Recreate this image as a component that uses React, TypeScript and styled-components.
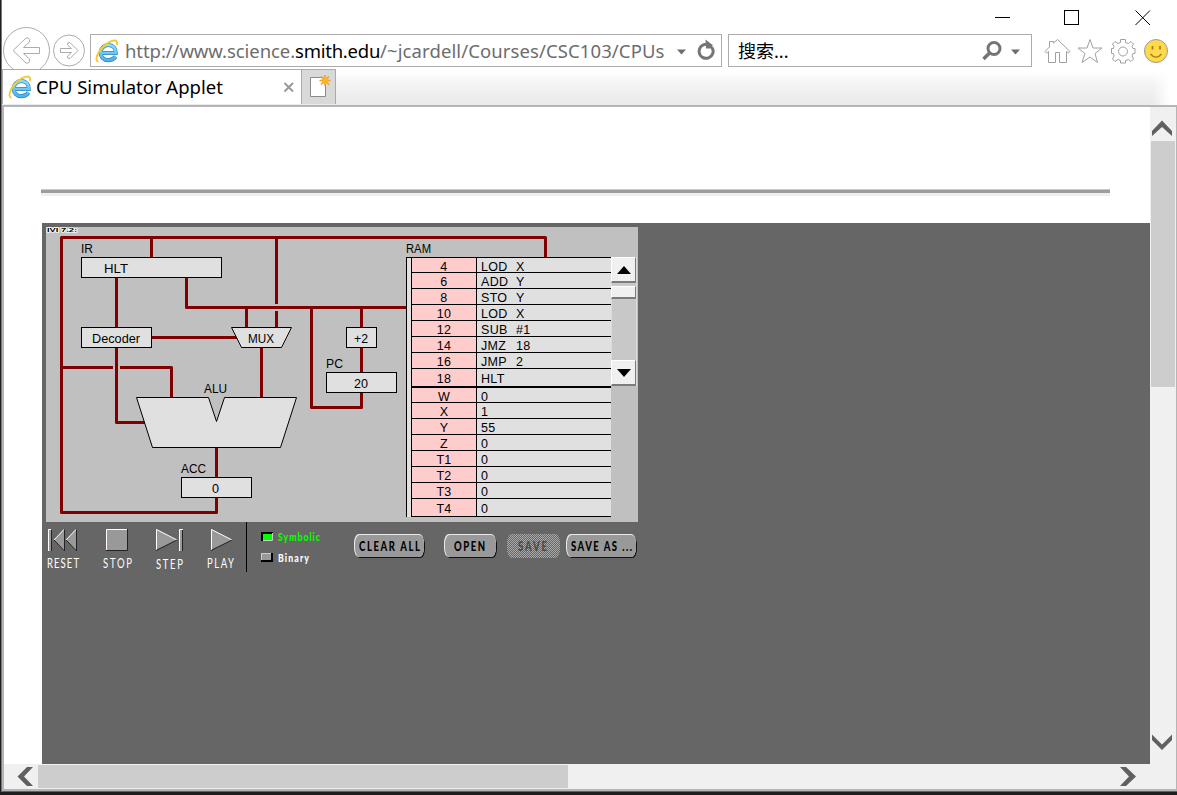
import React from "react";
import styled, { createGlobalStyle } from "styled-components";

const Global = createGlobalStyle`
  * { box-sizing: border-box; }
  body { margin: 0; background: #1c1c1c; overflow: hidden; }
`;

const UI_FONT = `"Noto Sans", "Noto Sans CJK SC", sans-serif`;

const Frame = styled.div`
  width: 1177px;
  height: 795px;
  padding-left: 1px;
  background: #1e1e20;
`;
const Window = styled.div`
  width: 1176px;
  height: 792px;
  border-left: 1px solid #3c87c7;
  border-bottom: 1px solid #1f74bd;
  background: #fff;
  display: flex;
  flex-direction: column;
  font-family: ${UI_FONT};
`;
const TitleBar = styled.div`
  height: 34px;
  flex: none;
  display: flex;
  justify-content: flex-end;
  padding: 10px 26px 0 0;
  gap: 54px;
`;
const NavBar = styled.div`
  height: 35px;
  flex: none;
  display: flex;
`;
const NavButtons = styled.svg`
  width: 88px;
  height: 42px;
  margin-top: -7px;
  flex: none;
`;
const Field = styled.div<{ $w: number }>`
  width: ${(p) => p.$w}px;
  height: 33px;
  border: 1px solid #ababab;
  display: flex;
  align-items: center;
  white-space: nowrap;
  flex: none;
`;
const Url = styled.div`
  width: 546px;
  margin-left: 6px;
  font-size: 18.5px;
  line-height: 30px;
  color: #6d6d6d;
  letter-spacing: -0.07px;
  b { font-weight: 400; color: #000; letter-spacing: -0.25px; }
  span { letter-spacing: 0.1px; }
`;
const Placeholder = styled.div`
  width: 245px;
  padding-left: 9px;
  font-size: 18px;
  line-height: 30px;
  color: #000;
`;
const Tools = styled.div`
  display: flex;
  gap: 6px;
  padding: 4px 0 0 12px;
`;
const TabStrip = styled.div`
  height: 36px;
  flex: none;
  display: flex;
  padding-bottom: 1px;
  background: linear-gradient(90deg, transparent 1150px, #fff 1168px),
    linear-gradient(#fff 2px, #f3f3f3 16px, #ebebeb 34px);
`;
const Tab = styled.div`
  width: 299px;
  height: 35px;
  border-top: 1px solid #ababab;
  border-left: 1px solid #ababab;
  background: #fff;
  display: flex;
  align-items: center;
  padding: 0 0 1px 5px;
  font-size: 18.5px;
  color: #000;
`;
const TabTitle = styled.span`
  width: 251px;
  padding-left: 4px;
  white-space: nowrap;
`;
const NewTab = styled.div`
  width: 35px;
  height: 35px;
  border: 1px solid #ababab;
  border-bottom: 0;
  background: #d9d9d9;
  padding: 5px 0 0 7px;
`;
const Viewport = styled.div`
  flex: 1;
  border: 2px solid #b5b5b5;
  border-right-width: 1px;
  display: grid;
  grid-template-columns: 1146px 26px;
  grid-template-rows: 657px 24px;
  background: #f0f0f0;
`;
const Page = styled.div`
  background: #fff;
  padding-top: 82px;
  overflow: hidden;
`;
const Rule = styled.div`
  width: 1069px;
  height: 7px;
  margin-left: 37px;
  background: linear-gradient(#c9c9c9 1px, #9d9d9d 1px 4px, #efefef 4px);
`;
const Applet = styled.div`
  margin: 27px 0 0 38px;
  height: 541px;
  background: #666;
  padding: 4px;
`;
const Machine = styled.div`
  width: 592px;
  height: 295px;
  background: #c0c0c0;
  display: grid;
  font-family: "Liberation Sans", Arial, sans-serif;
  & > * { grid-area: 1 / 1; }
`;
const Ram = styled.div`
  margin: 30px 0 0 360px;
  display: flex;
  width: 232px;
`;
const Cells = styled.div`
  width: 205px;
  height: 260px;
  border: 1px solid #000;
  border-right: 0;
  border-bottom: 0;
  background: #e0e0e0;
  padding-left: 4px;
`;
const lineHeights: Record<number, number> = { 15: 19, 16: 18, 18: 21, 19: 20 };
const Row = styled.div<{ $h: number; $thick?: boolean }>`
  height: ${(p) => p.$h}px;
  border-left: 1px solid #000;
  border-bottom: ${(p) => (p.$thick ? 2 : 1)}px solid #000;
  display: flex;
  font-size: 12.5px;
  line-height: ${(p) => lineHeights[p.$h]}px;
  letter-spacing: 0.3px;
  white-space: pre;
`;
const Addr = styled.div`
  width: 65px;
  background: #ffcccc;
  border-right: 1px solid #000;
  text-align: center;
`;
const Op = styled.div`
  padding-left: 4px;
  min-width: 39px;
`;
const RamScroll = styled.div`
  width: 26px;
  height: 129px;
  background: #c8c8c8;
  border: 1px solid #dcdcdc;
  border-width: 0 1px;
  display: flex;
  flex-direction: column;
`;
const Raised = styled.div<{ $h: number }>`
  height: ${(p) => p.$h}px;
  margin: 0 0 0 -1px;
  background: #f0f0f0;
  border: 1px solid;
  border-color: #fff #7b7b7b #7b7b7b #fff;
  border-bottom-width: 2px;
  display: flex;
  align-items: center;
  justify-content: center;
`;
const Controls = styled.div`
  height: 50px;
  width: 600px;
  display: flex;
`;
const Transport = styled.svg`
  width: 318px;
  height: 50px;
  flex: none;
`;
const FileButtons = styled.svg`
  width: 290px;
  height: 50px;
`;
const VBar = styled.div`
  padding: 0 1px;
  display: flex;
  flex-direction: column;
  justify-content: space-between;
`;
const HBar = styled.div`
  grid-column: 1 / 3;
  display: flex;
  padding-top: 1px;
`;
const Thumb = styled.div<{ $w: number; $h: number }>`
  width: ${(p) => p.$w}px;
  height: ${(p) => p.$h}px;
  background: #cdcdcd;
`;

const E_SHAPE = "M20.600 17.500Q18 21.200 13.300 21.200C8.500 21.200 5.600 17.800 5.600 13.800C5.600 9.500 8.800 6 13.400 6C18 6 21 9.300 20.800 14H7";

const IeLogo = () => (
  <svg width="24" height="24" viewBox="0 0 24 24">
    <defs>
      <linearGradient id="ie" x1="0" y1="0" x2="0" y2="1">
        <stop offset="0" stopColor="#8be0fb" />
        <stop offset="1" stopColor="#4fb3ea" />
      </linearGradient>
    </defs>
    <path d={E_SHAPE} fill="none" stroke="#2f86c6" strokeWidth="4" />
    <path d={E_SHAPE} fill="none" stroke="url(#ie)" strokeWidth="2.600" />
    <path
      d="M3.500 22.800C-1 22 2.500 12 10 6C15 1.800 20 .6 21.600 2.400C22.500 3.400 22.200 4.800 21.600 6"
      fill="none"
      stroke="#f9c833"
      strokeWidth="1.900"
    />
  </svg>
);

const Wires = () => (
  <g stroke="#800000" strokeWidth="3" fill="none" strokeLinejoin="round">
    <path d="M499.500 30V10.500H15.500V285.500H170.500V271M105.500 10V30M230.500 10V77M230.500 84V100" />
    <path d="M70.500 51V100M140.500 51V80.500H360M200.500 80V100M106 110.500H192" />
    <path d="M265.500 80V180.500H315.500V166M315.500 80V100M315.500 121V145" />
    <path d="M215.500 121V170M15 140.500H67M74 140.500H125.500V170M70.500 121V195.500H100M170.500 221V250" />
  </g>
);

const Box = ({ x, y, w }: { x: number; y: number; w: number }) => (
  <rect x={x + 0.5} y={y + 0.5} width={w} height="20" fill="#e0e0e0" stroke="#000" />
);

const labels: [string, number, number, number][] = [
  ["IR", 35, 26, 12],
  ["HLT", 58, 46, 24],
  ["Decoder", 46, 116, 48],
  ["MUX", 202, 116, 26],
  ["+2", 308, 116, 14],
  ["PC", 280, 141, 17],
  ["20", 308, 161, 14],
  ["ALU", 158, 166, 23],
  ["ACC", 135, 246, 25],
  ["0", 166, 266, 7],
  ["RAM", 360, 26, 25],
];

const rows: [string, string, string, number][] = [
  ["4", "LOD", "X", 15],
  ["6", "ADD", "Y", 16],
  ["8", "STO", "Y", 16],
  ["10", "LOD", "X", 16],
  ["12", "SUB", "#1", 16],
  ["14", "JMZ", "18", 16],
  ["16", "JMP", "2", 16],
  ["18", "HLT", "", 19],
  ["W", "0", "", 15],
  ["X", "1", "", 16],
  ["Y", "55", "", 16],
  ["Z", "0", "", 16],
  ["T1", "0", "", 16],
  ["T2", "0", "", 16],
  ["T3", "0", "", 16],
  ["T4", "0", "", 18],
];

const transport: [string, number, number, number][] = [
  ["RESET", 1, 46, 32],
  ["STOP", 57, 46, 29],
  ["STEP", 110, 47, 27],
  ["PLAY", 161, 46, 27],
];

const fileButtons: [string, number, number, number, number, boolean][] = [
  ["CLEAR ALL", -10, 71, 5, 61, true],
  ["OPEN", 80, 53, 10, 31, true],
  ["SAVE", 143, 53, 11, 29, false],
  ["SAVE AS ...", 202, 71, 5, 61, true],
];

const CONDENSED = `Lato, "Open Sans", sans-serif`;
const SQUEEZE = 0.76;

type NarrowProps = { x: number; y: number; w: number; size: number; weight?: number; fill: string; children: string };
const Narrow = ({ x, y, w, size, weight = 400, fill, children }: NarrowProps) => (
  <text
    transform={`translate(${x} ${y}) scale(${SQUEEZE} 1)`}
    textLength={w / SQUEEZE}
    fontSize={size}
    fontWeight={weight}
    fill={fill}
  >
    {children}
  </text>
);

export default function App() {
  return (
    <Frame>
      <Global />
      <Window>
        <TitleBar>
          <svg width="16" height="16"><path d="M0 7.500H15" stroke="#000" /></svg>
          <svg width="16" height="16" viewBox="1 0 16 16" overflow="visible"><rect x=".5" y=".5" width="14" height="14" fill="none" stroke="#000" /></svg>
          <svg width="16" height="16"><path d="M.5.5L15 15M15 .5L.5 15" stroke="#000" /></svg>
        </TitleBar>
        <NavBar>
          <NavButtons viewBox="2 27 88 42">
            <g fill="none" stroke="#ababab">
              <circle cx="26.500" cy="50.500" r="23" />
              <circle cx="69" cy="50.500" r="15.500" />
              <path d="M13 50.500L26 38Q30 37 29.500 42L23.500 47.500H39.500V53.500H23.500L29.500 59Q30 64 26 63Z" />
              <path d="M78 50.500L70 42.500Q67 42 67.500 45L71.500 48.500H60.500V52.500H71.500L67.500 56Q67 59 70 58.500Z" />
            </g>
          </NavButtons>
          <Field $w={632}>
            <svg width="4" height="4" />
            <IeLogo />
            <Url>http://www.science.<b>smith.edu</b><span>/~jcardell/Courses/CSC103/CPUs</span></Url>
            <svg width="44" height="31">
              <path d="M6 14.500H15L10.500 19.500Z" fill="#6d6d6d" />
              <path d="M41 12.500A7 7 0 1 1 35.500 9.300" fill="none" stroke="#757575" strokeWidth="3" />
              <path d="M34.500 4.500L41 9.500H41.500V13.500H35Z" fill="#757575" />
            </svg>
          </Field>
          <svg width="6" height="1" />
          <Field $w={304}>
            <Placeholder>搜索...</Placeholder>
            <svg width="50" height="31">
              <circle cx="20" cy="13.500" r="6" fill="none" stroke="#757575" strokeWidth="3" />
              <path d="M15.500 18L9.500 24" stroke="#757575" strokeWidth="3.500" />
              <path d="M37 14.500H46L41.500 19.500Z" fill="#6d6d6d" />
            </svg>
          </Field>
          <Tools>
            <svg width="27" height="27" fill="none" stroke="#a0a0a0">
              <path d="M1 13.500L5.500 9V3.500H9.500V5L13.500 1.500L26 13.500L24.500 15L22.500 13.500V24.500H15.500V14.500H11.500V24.500H4.500V13.500L2.500 15Z" />
            </svg>
            <svg width="27" height="27" fill="none" stroke="#a0a0a0">
              <path d="M13 1.500L16 10H25L18 15.500L20.500 24.500L13 19L5 24.500L8 15.500L1 10H10Z" />
            </svg>
            <svg width="27" height="27" fill="none" stroke="#a0a0a0" strokeLinejoin="round">
              <path d="M10.500 1.500H15.500V4.500L18.500 5.500L21 3.500L23.500 6L22 8.500L23 10.500H25V15.500H23L22 18L23.500 21L21 23.500L18.500 21.500L15.500 22.500V25H10.500V22.500L8 21.500L5 23.500L2.500 21L4 18L3.500 15.500H1.500V10.500H3.500L4 8.500L2.500 6L5 3.500L8 5.500L10.500 4.500Z" />
              <circle cx="13" cy="13.500" r="4.500" />
            </svg>
            <svg width="27" height="27">
              <circle cx="13" cy="13" r="11.500" fill="#ffd94a" stroke="#9a9a9a" />
              <path d="M9.500 8V11.500M17 8V11.500" stroke="#a08420" strokeWidth="1.800" />
              <path d="M7.500 16Q13 22.500 18.500 16" fill="none" stroke="#a08420" strokeWidth="1.500" />
            </svg>
          </Tools>
        </NavBar>
        <TabStrip>
          <Tab>
            <IeLogo />
            <TabTitle>CPU Simulator Applet</TabTitle>
            <svg width="12" height="12"><path d="M1.500 2L10 10.500M10 2L1.500 10.500" stroke="#999" strokeWidth="2" /></svg>
          </Tab>
          <NewTab>
            <svg width="24" height="24">
              <path d="M1.500 2.500H16.500V21.500H1.500Z" fill="#fff" stroke="#8b8b8b" />
              <path d="M16 0V11M10.500 5.500H21.500M12 1.500L20 9.500M20 1.500L12 9.500" stroke="#f29d20" strokeWidth="1.500" />
              <circle cx="16" cy="5.500" r="3.500" fill="#fbb32c" />
            </svg>
          </NewTab>
        </TabStrip>
        <Viewport>
          <Page>
            <Rule />
            <Applet>
              <Machine>
                <svg width="592" height="295" fontSize="12.500">
                  <text x="1" y="4.500" fontSize="5" fontWeight="700" fill="#000" stroke="#fff" strokeWidth="1.200" paintOrder="stroke" textLength="30" lengthAdjust="spacingAndGlyphs">IVI 7.2:</text>
                  <Wires />
                  <Box x={35} y={30} w={140} />
                  <Box x={35} y={100} w={70} />
                  <Box x={300} y={100} w={30} />
                  <Box x={280} y={145} w={70} />
                  <Box x={135} y={250} w={70} />
                  <path d="M185.500 100.500H245.500L235.500 120.500H195.500Z" fill="#e0e0e0" stroke="#000" />
                  <path d="M90.500 170.500H162.500L170.500 194.500L178.500 170.500H250.500L234.500 220.500H106.500Z" fill="#e0e0e0" stroke="#000" />
                  {labels.map(([t, x, y, w]) => (
                    <text key={t} x={x} y={y} textLength={w} lengthAdjust="spacingAndGlyphs">{t}</text>
                  ))}
                </svg>
                <Ram>
                  <Cells>
                    {rows.map(([a, op, arg, h], i) => (
                      <Row key={i} $h={h} $thick={i === 7}>
                        <Addr>{a}</Addr>
                        <Op>{op}</Op>
                        {arg}
                      </Row>
                    ))}
                  </Cells>
                  <RamScroll>
                    <Raised $h={26}><svg width="14" height="8"><path d="M0 8H14L7 0Z" /></svg></Raised>
                    <svg width="1" height="3" />
                    <Raised $h={13} />
                    <svg width="1" height="61" />
                    <Raised $h={26}><svg width="14" height="8"><path d="M0 0H14L7 8Z" /></svg></Raised>
                  </RamScroll>
                </Ram>
              </Machine>
              <Controls>
                <Transport fontFamily={CONDENSED}>
                  <g fill="#999">
                    <path d="M2 7H5V29H2ZM18 7V29L8 18ZM30 7V29L20 18ZM60 7H81V28H60ZM110 7L131 18L110 28ZM133 7H136V29H133ZM165 7L186 18L165 28Z" />
                  </g>
                  <path d="M5 7.500H2.500V29M18 7.500L8 18M30 7.500L20 18M81 7.500H60.500V28M131 18L110.500 7.500V28M137 7.500H133.500V29M186 18L165.500 7.500V28" stroke="#fff" fill="none" />
                  <path d="M18.500 7.500V29L8 18M30.500 7.500V29L20 18M81.500 7V28.500H60M131 18L110 28.500M136.500 8V29M186 18L165 28.500M5.500 8V29" stroke="#222" fill="none" />
                  <path d="M200.500 0V50" stroke="#000" />
                  {transport.map(([t, x, y, w]) => (
                    <Narrow key={t} x={x} y={y} w={w} size={12.5} fill="#fff">{t}</Narrow>
                  ))}
                  <rect x="215" y="10" width="12" height="9" fill="#000" />
                  <path d="M217 18.500H226.500V11" fill="none" stroke="#ccc" />
                  <rect x="217" y="12" width="9" height="6" fill="#00ff00" />
                  <rect x="215" y="31" width="12" height="9" fill="#000" />
                  <rect x="215" y="31" width="10" height="7" fill="#ccc" />
                  <rect x="216" y="32" width="9" height="6" fill="#999" />
                  <Narrow x={232} y={19} w={42} size={11.5} weight={900} fill="#00ff00">Symbolic</Narrow>
                  <Narrow x={232} y={40} w={31} size={11.5} weight={900} fill="#fff">Binary</Narrow>
                </Transport>
                <FileButtons fontFamily={CONDENSED} overflow="visible">
                  <defs>
                    <pattern id="dither" width="2" height="2" patternUnits="userSpaceOnUse">
                      <rect width="2" height="2" fill="#666" />
                      <rect width="1" height="1" fill="#aaa" />
                      <rect x="1" y="1" width="1" height="1" fill="#aaa" />
                    </pattern>
                  </defs>
                  {fileButtons.map(([t, x, w, dx, tw, on]) => (
                    <g key={t}>
                      {on && <rect x={x + 1} y="14" width={w - 1} height="22" rx="4.500" ry="9" fill="#111" />}
                      {on && <rect x={x} y="12" width={w - 1} height="23" rx="4.500" ry="9" fill="#e8e8e8" />}
                      <rect x={x + (on ? 1 : 0)} y={on ? 13 : 12} width={w - (on ? 2 : 0)} height={on ? 22 : 24} rx="4.500" ry="9" fill={on ? "#999" : "url(#dither)"} />
                      <Narrow x={x + dx} y={29} w={tw} size={12.5} weight={900} fill={on ? "#000" : "#4a4a4a"}>{t}</Narrow>
                    </g>
                  ))}
                </FileButtons>
              </Controls>
            </Applet>
          </Page>
          <VBar>
            <div>
              <svg width="24" height="34" display="block"><path d="M1 24L11 13.500L21 24V29L11 20L1 29Z" fill="#606060" /></svg>
              <Thumb $w={24} $h={246} />
            </div>
            <svg width="24" height="34"><path d="M1 4.500L11 14.500L21 4.500V10L11 20L1 10Z" fill="#606060" /></svg>
          </VBar>
          <HBar>
            <svg width="34" height="22"><path d="M29 2H23L13.500 11.500L23 21H29L20 11.500Z" fill="#606060" /></svg>
            <Thumb $w={530} $h={23} />
            <svg width="600" height="22"><path d="M552 2H558L568 11.500L558 21H552L561 11.500Z" fill="#606060" /></svg>
          </HBar>
        </Viewport>
      </Window>
    </Frame>
  );
}
